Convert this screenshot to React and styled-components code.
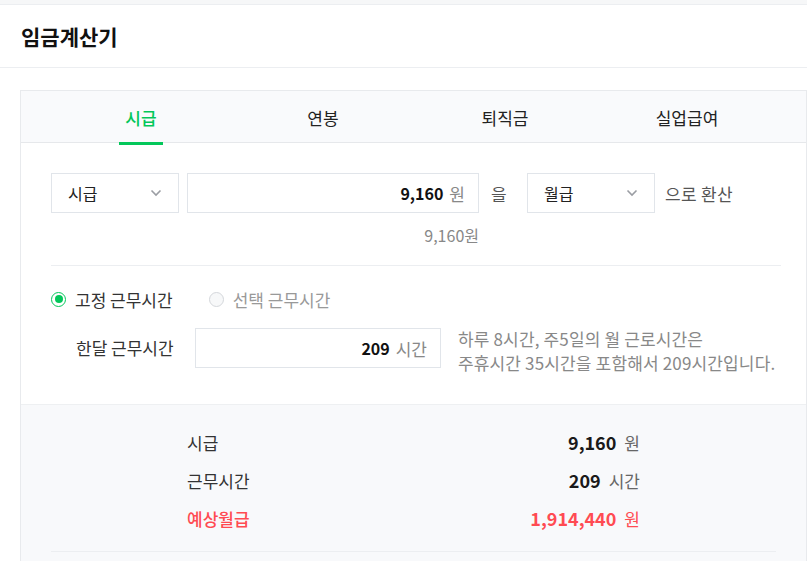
import React, { useState } from "react";
import styled, { createGlobalStyle } from "styled-components";

const GlobalStyle = createGlobalStyle`
  html, body {
    margin: 0;
    padding: 0;
    background: #fff;
  }
  body {
    font-family: "Noto Sans CJK KR", "Noto Sans", sans-serif;
    color: #222;
  }
  * { box-sizing: border-box; }
`;

const Page = styled.div`
  padding-top: 4px;
  background: #f6f7f8;
`;

const Body = styled.div`
  background: #fff;
  border-top: 1px solid #eceef1;
  padding-bottom: 20px;
`;

const Header = styled.div`
  height: 63px;
  display: flex;
  align-items: center;
  padding-left: 21px;
  border-bottom: 1px solid #eceef1;
`;

const Title = styled.h1`
  margin: 0;
  font-size: 21px;
  font-weight: 700;
  line-height: 26px;
  color: #111;
`;

const Card = styled.div`
  margin: 22px 0 0 20px;
  border: 1px solid #e8eaed;
`;

const Tabs = styled.div`
  height: 52px;
  display: grid;
  grid-template-columns: repeat(4, 1fr);
  padding: 0 28px 0 29px;
  background: #f9fafc;
  border-bottom: 1px solid #e6e8eb;
`;

const Tab = styled.div`
  display: flex;
  align-items: center;
  justify-content: center;
  cursor: pointer;
`;

const TabLabel = styled.span`
  position: relative;
  padding: 0 6px;
  font-size: 17px;
  line-height: 22px;
  margin-top: 2px;
  color: ${({ $active }) => ($active ? "#03c75a" : "#222")};
  font-weight: ${({ $active }) => ($active ? 500 : 400)};
  &::after {
    content: "";
    display: ${({ $active }) => ($active ? "block" : "none")};
    position: absolute;
    left: 0;
    right: 0;
    bottom: -16px;
    height: 3px;
    background: #03c75a;
  }
`;

const Content = styled.div`
  padding: 30px 25px 29px 30px;
`;

const ConvertRow = styled.div`
  display: flex;
  align-items: center;
`;

const SelectBox = styled.div`
  width: 128px;
  height: 40px;
  border: 1px solid #e1e5ea;
  display: flex;
  align-items: center;
  justify-content: space-between;
  padding: 0 16px;
  font-size: 16px;
  color: #222;
  margin-left: ${({ $ml }) => $ml || 0}px;
  svg { display: block; }
`;

const InputBox = styled.div`
  width: ${({ $w }) => $w}px;
  height: 40px;
  border: 1px solid #e1e5ea;
  margin-left: ${({ $ml }) => $ml || 0}px;
  display: flex;
  align-items: center;
  justify-content: flex-end;
  gap: 6px;
  padding-right: 13px;
  flex-shrink: 0;
`;

const InputValue = styled.span`
  font-size: 16px;
  font-weight: 700;
  color: #111;
`;

const InputUnit = styled.span`
  font-size: 17px;
  color: #888;
`;

const Particle = styled.span`
  font-size: 17px;
  color: #555;
  margin-left: ${({ $ml }) => $ml}px;
  letter-spacing: 0.3px;
`;

const Converted = styled.div`
  width: 428px;
  text-align: right;
  margin-top: 12px;
  font-size: 16px;
  line-height: 20px;
  color: #888;
`;

const Divider = styled.div`
  height: 1px;
  background: #eceef1;
  margin: ${({ $m }) => $m};
`;

const RadioRow = styled.div`
  display: flex;
  align-items: center;
  height: 20px;
`;

const RadioItem = styled.label`
  display: flex;
  align-items: center;
  gap: 9px;
  margin-right: 36px;
  font-size: 17px;
  color: ${({ $checked }) => ($checked ? "#333" : "#999")};
  cursor: pointer;
`;

const RadioCircle = styled.span`
  width: 15px;
  height: 15px;
  border-radius: 50%;
  border: ${({ $checked }) => ($checked ? "1.5px solid #03c75a" : "1px solid #d4d7db")};
  background: ${({ $checked }) => ($checked ? "#fff" : "#f7f8f9")};
  display: flex;
  align-items: center;
  justify-content: center;
  &::after {
    content: "";
    display: ${({ $checked }) => ($checked ? "block" : "none")};
    width: 8px;
    height: 8px;
    border-radius: 50%;
    background: #03c75a;
  }
`;

const HoursRow = styled.div`
  display: flex;
  align-items: flex-start;
  margin-top: 19px;
  padding-left: 25px;
`;

const FieldLabel = styled.span`
  font-size: 17px;
  line-height: 40px;
  color: #333;
  width: 119px;
  flex-shrink: 0;
`;

const HelpText = styled.p`
  margin: -1px 0 0 17px;
  font-size: 17px;
  line-height: 24px;
  color: #888;
  white-space: nowrap;
  letter-spacing: 0.15px;
`;

const Result = styled.div`
  background: #f8f9fb;
  border-top: 1px solid #eef0f2;
  padding: 18px 0 30px;
`;

const ResultList = styled.div`
  width: 453px;
  margin: 0 auto;
`;

const ResultRow = styled.div`
  height: 38px;
  display: flex;
  align-items: center;
  justify-content: space-between;
`;

const ResultLabel = styled.span`
  font-size: 17px;
  color: ${({ $red }) => ($red ? "#ff4b52" : "#333")};
  font-weight: ${({ $red }) => ($red ? 500 : 400)};
`;

const ResultValue = styled.span`
  display: flex;
  align-items: baseline;
  gap: 8px;
`;

const Num = styled.span`
  font-size: 18px;
  font-weight: 700;
  color: ${({ $red }) => ($red ? "#ff4b52" : "#1a1a1a")};
`;

const Unit = styled.span`
  font-size: 17px;
  color: ${({ $red }) => ($red ? "#ff4b52" : "#666")};
`;

const Chevron = () => (
  <svg width="12" height="8" viewBox="0 0 12 8">
    <polyline points="1.5,1.5 6,6 10.5,1.5" fill="none" stroke="#9a9da3" strokeWidth="1.6" />
  </svg>
);

const tabs = ["시급", "연봉", "퇴직금", "실업급여"];

const results = [
  { label: "시급", num: "9,160", unit: "원" },
  { label: "근무시간", num: "209", unit: "시간" },
  { label: "예상월급", num: "1,914,440", unit: "원", red: true },
];

const App = () => {
  const [active, setActive] = useState(0);
  const [fixed, setFixed] = useState(true);

  return (
    <Page>
      <GlobalStyle />
      <Body>
        <Header>
          <Title>임금계산기</Title>
        </Header>
        <Card>
          <Tabs>
            {tabs.map((t, i) => (
              <Tab key={t} onClick={() => setActive(i)}>
                <TabLabel $active={active === i}>{t}</TabLabel>
              </Tab>
            ))}
          </Tabs>
          <Content>
            <ConvertRow>
              <SelectBox>
                시급
                <Chevron />
              </SelectBox>
              <InputBox $w={292} $ml={8}>
                <InputValue>9,160</InputValue>
                <InputUnit>원</InputUnit>
              </InputBox>
              <Particle $ml={12}>을</Particle>
              <SelectBox $ml={20}>
                월급
                <Chevron />
              </SelectBox>
              <Particle $ml={10}>으로 환산</Particle>
            </ConvertRow>
            <Converted>9,160원</Converted>
            <Divider $m="20px 0 23px 0" />
            <RadioRow>
              <RadioItem $checked={fixed} onClick={() => setFixed(true)}>
                <RadioCircle $checked={fixed} />
                고정 근무시간
              </RadioItem>
              <RadioItem $checked={!fixed} onClick={() => setFixed(false)}>
                <RadioCircle $checked={!fixed} />
                선택 근무시간
              </RadioItem>
            </RadioRow>
            <HoursRow>
              <FieldLabel>한달 근무시간</FieldLabel>
              <InputBox $w={246}>
                <InputValue>209</InputValue>
                <InputUnit>시간</InputUnit>
              </InputBox>
              <HelpText>
                하루 8시간, 주5일의 월 근로시간은
                <br />
                주휴시간 35시간을 포함해서 209시간입니다.
              </HelpText>
            </HoursRow>
          </Content>
          <Result>
            <ResultList>
              {results.map((r) => (
                <ResultRow key={r.label}>
                  <ResultLabel $red={r.red}>{r.label}</ResultLabel>
                  <ResultValue>
                    <Num $red={r.red}>{r.num}</Num>
                    <Unit $red={r.red}>{r.unit}</Unit>
                  </ResultValue>
                </ResultRow>
              ))}
            </ResultList>
            <Divider $m="14px 30px 0 30px" />
          </Result>
        </Card>
      </Body>
    </Page>
  );
};

export default App;
